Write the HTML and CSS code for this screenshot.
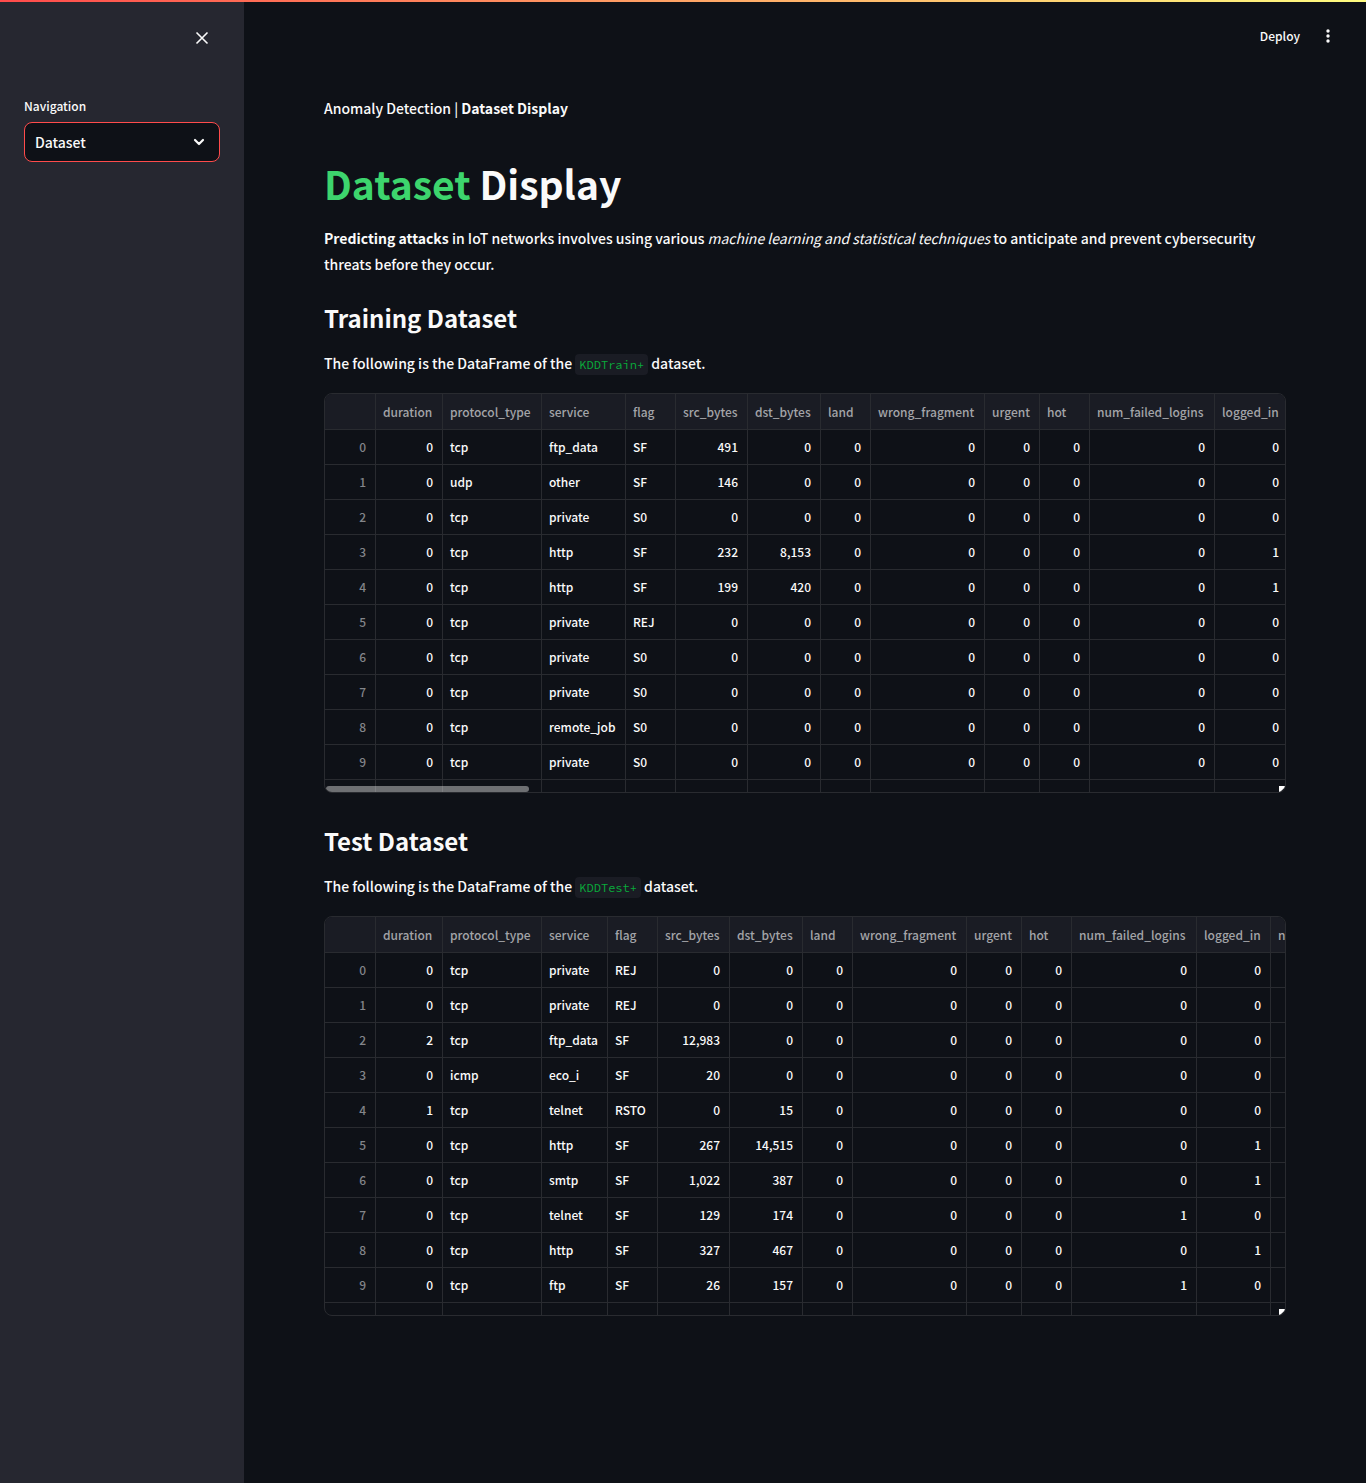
FILE: index.html
```
<!DOCTYPE html>
<html lang="en">
<head>
<meta charset="utf-8">
<meta name="viewport" content="width=device-width, initial-scale=1">
<title>Anomaly Detection | Dataset Display</title>
<link rel="stylesheet" href="styles.css">
</head>
<body>
<div class="decoration"></div>
<div class="app">
  <aside class="sidebar">
    <div class="sidebar-head">
      <button class="icon-button" type="button" aria-label="Close sidebar">
        <svg width="20" height="20" viewBox="0 0 20 20" fill="none" stroke="currentColor" stroke-width="1.6"><path d="M4.5 4.5 15.5 15.5M15.5 4.5 4.5 15.5"/></svg>
      </button>
    </div>
    <div class="field">
      <label for="nav">Navigation</label>
      <div class="select">
        <select id="nav"><option>Dataset</option></select>
        <svg class="chevron" width="20" height="20" viewBox="0 0 20 20" fill="none" stroke="currentColor" stroke-width="2.2" stroke-linecap="round" stroke-linejoin="round"><path d="M6 8 10 12 14 8"/></svg>
      </div>
    </div>
  </aside>
  <div class="page">
    <header class="toolbar">
      <button class="deploy" type="button">Deploy</button>
      <button class="icon-button" type="button" aria-label="Main menu">
        <svg width="20" height="20" viewBox="0 0 20 20" fill="currentColor"><circle cx="10" cy="5" r="1.7"/><circle cx="10" cy="10" r="1.7"/><circle cx="10" cy="15" r="1.7"/></svg>
      </button>
    </header>
    <main class="content">
      <div class="intro">
        <p>Anomaly Detection | <strong>Dataset Display</strong></p>
        <h1><span class="green">Dataset</span> Display</h1>
        <p><strong>Predicting attacks</strong> in IoT networks involves using various <em>machine learning and statistical techniques</em> to anticipate and prevent cybersecurity threats before they occur.</p>
      </div>
      <section class="dataset">
        <h2>Training Dataset</h2>
        <p>The following is the DataFrame of the <code>KDDTrain+</code> dataset.</p>
        <div class="frame">
          <table>
            <colgroup><col class="w51"><col class="w67"><col class="w99"><col class="w84"><col class="w50"><col class="w72"><col class="w73"><col class="w50"><col class="w114"><col class="w55"><col class="w50"><col class="w125"><col class="w74"></colgroup>
            <thead>
              <tr><th><th>duration<th>protocol_type<th>service<th>flag<th>src_bytes<th>dst_bytes<th>land<th>wrong_fragment<th>urgent<th>hot<th>num_failed_logins<th>logged_in</tr>
            </thead>
            <tbody>
              <tr><th>0<td>0<td>tcp<td>ftp_data<td>SF<td>491<td>0<td>0<td>0<td>0<td>0<td>0<td>0</tr>
              <tr><th>1<td>0<td>udp<td>other<td>SF<td>146<td>0<td>0<td>0<td>0<td>0<td>0<td>0</tr>
              <tr><th>2<td>0<td>tcp<td>private<td>S0<td>0<td>0<td>0<td>0<td>0<td>0<td>0<td>0</tr>
              <tr><th>3<td>0<td>tcp<td>http<td>SF<td>232<td>8,153<td>0<td>0<td>0<td>0<td>0<td>1</tr>
              <tr><th>4<td>0<td>tcp<td>http<td>SF<td>199<td>420<td>0<td>0<td>0<td>0<td>0<td>1</tr>
              <tr><th>5<td>0<td>tcp<td>private<td>REJ<td>0<td>0<td>0<td>0<td>0<td>0<td>0<td>0</tr>
              <tr><th>6<td>0<td>tcp<td>private<td>S0<td>0<td>0<td>0<td>0<td>0<td>0<td>0<td>0</tr>
              <tr><th>7<td>0<td>tcp<td>private<td>S0<td>0<td>0<td>0<td>0<td>0<td>0<td>0<td>0</tr>
              <tr><th>8<td>0<td>tcp<td>remote_job<td>S0<td>0<td>0<td>0<td>0<td>0<td>0<td>0<td>0</tr>
              <tr><th>9<td>0<td>tcp<td>private<td>S0<td>0<td>0<td>0<td>0<td>0<td>0<td>0<td>0</tr>
              <tr><th><td><td><td><td><td><td><td><td><td><td><td><td></tr>
            </tbody>
          </table>
          <div class="scroll-thumb"></div>
          <div class="resize-corner"></div>
        </div>
      </section>
      <section class="dataset">
        <h2>Test Dataset</h2>
        <p>The following is the DataFrame of the <code>KDDTest+</code> dataset.</p>
        <div class="frame">
          <table>
            <colgroup><col class="w51"><col class="w67"><col class="w99"><col class="w66"><col class="w50"><col class="w72"><col class="w73"><col class="w50"><col class="w114"><col class="w55"><col class="w50"><col class="w125"><col class="w74"><col class="w125"></colgroup>
            <thead>
              <tr><th><th>duration<th>protocol_type<th>service<th>flag<th>src_bytes<th>dst_bytes<th>land<th>wrong_fragment<th>urgent<th>hot<th>num_failed_logins<th>logged_in<th>n</tr>
            </thead>
            <tbody>
              <tr><th>0<td>0<td>tcp<td>private<td>REJ<td>0<td>0<td>0<td>0<td>0<td>0<td>0<td>0<td></tr>
              <tr><th>1<td>0<td>tcp<td>private<td>REJ<td>0<td>0<td>0<td>0<td>0<td>0<td>0<td>0<td></tr>
              <tr><th>2<td>2<td>tcp<td>ftp_data<td>SF<td>12,983<td>0<td>0<td>0<td>0<td>0<td>0<td>0<td></tr>
              <tr><th>3<td>0<td>icmp<td>eco_i<td>SF<td>20<td>0<td>0<td>0<td>0<td>0<td>0<td>0<td></tr>
              <tr><th>4<td>1<td>tcp<td>telnet<td>RSTO<td>0<td>15<td>0<td>0<td>0<td>0<td>0<td>0<td></tr>
              <tr><th>5<td>0<td>tcp<td>http<td>SF<td>267<td>14,515<td>0<td>0<td>0<td>0<td>0<td>1<td></tr>
              <tr><th>6<td>0<td>tcp<td>smtp<td>SF<td>1,022<td>387<td>0<td>0<td>0<td>0<td>0<td>1<td></tr>
              <tr><th>7<td>0<td>tcp<td>telnet<td>SF<td>129<td>174<td>0<td>0<td>0<td>0<td>1<td>0<td></tr>
              <tr><th>8<td>0<td>tcp<td>http<td>SF<td>327<td>467<td>0<td>0<td>0<td>0<td>0<td>1<td></tr>
              <tr><th>9<td>0<td>tcp<td>ftp<td>SF<td>26<td>157<td>0<td>0<td>0<td>0<td>1<td>0<td></tr>
              <tr><th><td><td><td><td><td><td><td><td><td><td><td><td><td></tr>
            </tbody>
          </table>
          <div class="resize-corner"></div>
        </div>
      </section>
    </main>
  </div>
</div>
</body>
</html>
```
FILE: styles.css
```
* { box-sizing: border-box; }

body {
  margin: 0;
  min-height: 100vh;
  display: flex;
  flex-direction: column;
  background: #0e1117;
  color: #fafafa;
  font-family: "Source Sans Pro", "Noto Sans CJK SC", "Noto Sans", sans-serif;
  font-size: 14px;
  font-weight: 500;
  line-height: 26px;
}

button, select { font: inherit; color: inherit; }
button { background: none; border: 0; padding: 0; }
p, h1, h2 { margin: 0; }
em { font-weight: 400; }
svg { display: block; }

.decoration {
  height: 2px;
  background: linear-gradient(90deg, #ff4b4b, #fffd80);
}

.app { flex: 1; display: flex; }

.sidebar {
  flex: 0 0 244px;
  padding: 26px 24px 0;
  background: #262730;
}
.sidebar-head {
  display: flex;
  justify-content: flex-end;
  padding-right: 8px;
  margin-bottom: 48px;
}
.field label {
  display: block;
  font-size: 12px;
  line-height: 20px;
  margin-bottom: 6px;
}
.select { position: relative; }
.select select {
  display: block;
  width: 100%;
  height: 40px;
  padding: 0 32px 0 10px;
  appearance: none;
  background: #0e1117;
  border: 1px solid #ff4b4b;
  border-radius: 8px;
}
.chevron {
  position: absolute;
  right: 11px;
  top: 10px;
  pointer-events: none;
}

.page { flex: 1; min-width: 0; }

.toolbar {
  display: flex;
  justify-content: flex-end;
  align-items: center;
  gap: 18px;
  height: 68px;
  padding-right: 28px;
}
.deploy { font-size: 12px; line-height: 20px; }

.content { padding: 25px 80px 80px; }
.intro, .dataset {
  display: flex;
  flex-direction: column;
  gap: 16px;
}
.intro { margin-bottom: 24px; }
.dataset p { margin-bottom: 1px; }
.dataset + .dataset { margin-top: 31px; }

h1 {
  padding-top: 20px;
  font-size: 39px;
  line-height: 52px;
  font-weight: 700;
}
.green { color: #3dd56d; }
h2 {
  font-size: 24px;
  line-height: 33px;
  font-weight: 700;
}
code {
  padding: 3px 4px;
  border-radius: 4px;
  background: #1a1c24;
  color: #09ab3b;
  font-family: "Source Code Pro", "Liberation Mono", monospace;
  font-size: 12px;
  font-weight: 400;
  line-height: 14px;
}

.frame {
  position: relative;
  height: 400px;
  overflow: hidden;
  border: 1px solid #292b30;
  border-radius: 8px;
}
table {
  width: 0;
  table-layout: fixed;
  border-collapse: separate;
  border-spacing: 0;
  font-size: 12px;
  line-height: 20px;
}
th, td {
  height: 35px;
  padding: 0 9px 0 7px;
  border-right: 1px solid #292b30;
  border-bottom: 1px solid #292b30;
  text-align: right;
  font-weight: 500;
  white-space: nowrap;
}
thead th {
  height: 36px;
  padding: 0 7px;
  background: #1a1c24;
  color: #a3a4a8;
  text-align: left;
}
tbody th { color: #83858a; }
td:nth-child(3), td:nth-child(4), td:nth-child(5) { text-align: left; }

.w50 { width: 50px; }
.w51 { width: 51px; }
.w55 { width: 55px; }
.w66 { width: 66px; }
.w67 { width: 67px; }
.w72 { width: 72px; }
.w73 { width: 73px; }
.w74 { width: 74px; }
.w84 { width: 84px; }
.w99 { width: 99px; }
.w114 { width: 114px; }
.w125 { width: 125px; }

.scroll-thumb {
  position: absolute;
  left: 1px;
  bottom: 0;
  width: 203px;
  height: 6px;
  border-radius: 3px;
  background: rgba(255, 255, 255, 0.4);
}
.resize-corner {
  position: absolute;
  right: 0;
  bottom: 0;
  width: 6px;
  height: 6px;
  background: #fff;
  clip-path: polygon(0 0, 100% 0, 100% 20%, 20% 100%, 0 100%);
}
```
